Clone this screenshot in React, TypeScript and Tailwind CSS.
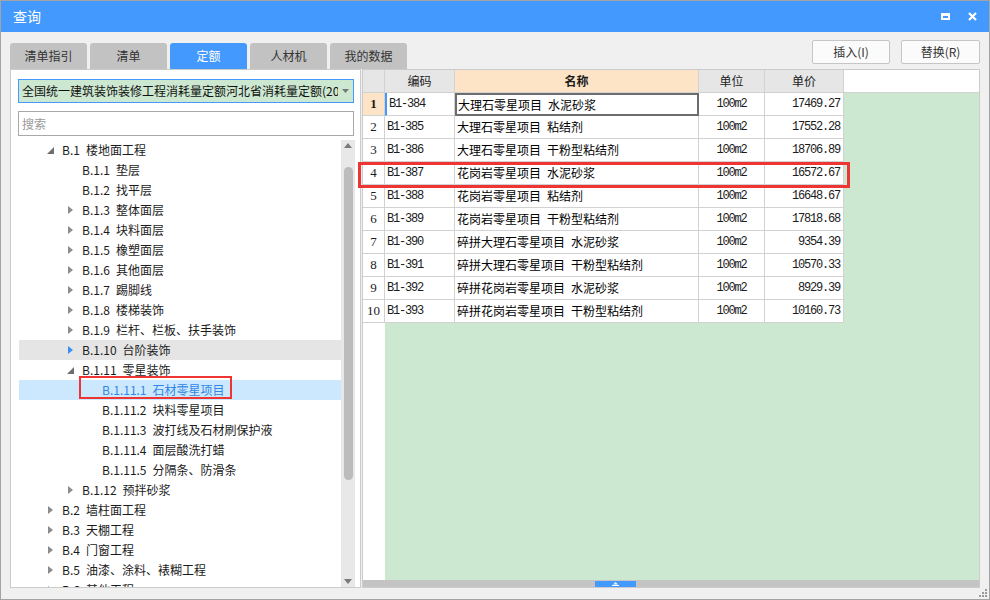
import React from 'react';

type Node = { lv: number; t: string; a?: 'open' | 'closed'; hover?: boolean; selected?: boolean };

const tree: Node[] = [
  { lv: 0, t: 'B.1 楼地面工程', a: 'open' },
  { lv: 1, t: 'B.1.1 垫层' },
  { lv: 1, t: 'B.1.2 找平层' },
  { lv: 1, t: 'B.1.3 整体面层', a: 'closed' },
  { lv: 1, t: 'B.1.4 块料面层', a: 'closed' },
  { lv: 1, t: 'B.1.5 橡塑面层', a: 'closed' },
  { lv: 1, t: 'B.1.6 其他面层', a: 'closed' },
  { lv: 1, t: 'B.1.7 踢脚线', a: 'closed' },
  { lv: 1, t: 'B.1.8 楼梯装饰', a: 'closed' },
  { lv: 1, t: 'B.1.9 栏杆、栏板、扶手装饰', a: 'closed' },
  { lv: 1, t: 'B.1.10 台阶装饰', a: 'closed', hover: true },
  { lv: 1, t: 'B.1.11 零星装饰', a: 'open' },
  { lv: 2, t: 'B.1.11.1 石材零星项目', selected: true },
  { lv: 2, t: 'B.1.11.2 块料零星项目' },
  { lv: 2, t: 'B.1.11.3 波打线及石材刷保护液' },
  { lv: 2, t: 'B.1.11.4 面层酸洗打蜡' },
  { lv: 2, t: 'B.1.11.5 分隔条、防滑条' },
  { lv: 1, t: 'B.1.12 预拌砂浆', a: 'closed' },
  { lv: 0, t: 'B.2 墙柱面工程', a: 'closed' },
  { lv: 0, t: 'B.3 天棚工程', a: 'closed' },
  { lv: 0, t: 'B.4 门窗工程', a: 'closed' },
  { lv: 0, t: 'B.5 油漆、涂料、裱糊工程', a: 'closed' },
  { lv: 0, t: 'B.6 其他工程', a: 'closed' },
];

// en space between the two halves of the name, as the grid renders it
const rows = [
  ['B1-384', '大理石零星项目\u2002水泥砂浆', '17469.27'],
  ['B1-385', '大理石零星项目\u2002粘结剂', '17552.28'],
  ['B1-386', '大理石零星项目\u2002干粉型粘结剂', '18706.89'],
  ['B1-387', '花岗岩零星项目\u2002水泥砂浆', '16572.67'],
  ['B1-388', '花岗岩零星项目\u2002粘结剂', '16648.67'],
  ['B1-389', '花岗岩零星项目\u2002干粉型粘结剂', '17818.68'],
  ['B1-390', '碎拼大理石零星项目\u2002水泥砂浆', '9354.39'],
  ['B1-391', '碎拼大理石零星项目\u2002干粉型粘结剂', '10570.33'],
  ['B1-392', '碎拼花岗岩零星项目\u2002水泥砂浆', '8929.39'],
  ['B1-393', '碎拼花岗岩零星项目\u2002干粉型粘结剂', '10160.73'],
];

const indent = ['pl-[24px]', 'pl-[44px]', 'pl-[64px]'];
const tabs = ['清单指引', '清单', '定额', '人材机', '我的数据'];

function Arrow({ a, blue }: { a?: 'open' | 'closed'; blue?: boolean }) {
  if (a === 'open')
    return (
      <svg width="7" height="7" viewBox="0 0 7 7">
        <path d="M7 0 L7 7 L0 7 Z" fill="#6e6e6e" />
      </svg>
    );
  if (a === 'closed')
    return (
      <svg width="5" height="8" viewBox="0 0 5 8">
        <path d="M0 0 L5 4 L0 8 Z" fill={blue ? '#3c8ff0' : '#8c8c8c'} />
      </svg>
    );
  return null;
}

const mono = "[font-family:'Liberation_Mono',monospace] text-[12px] tracking-[-1.2px]";

export default function App() {
  return (
    <div className="w-[990px] h-[600px] bg-[#f0f0f0] border border-[#a3a3a3] flex flex-col text-[12px] text-[#1b1b1b] [font-family:'Noto_Sans_CJK_SC','Noto_Sans',sans-serif] overflow-hidden">
      {/* title bar */}
      <div className="h-[31px] shrink-0 bg-[#4499fe] flex items-center pl-[12px] pr-[7px]">
        <span className="text-white text-[14px] flex-1">查询</span>
        <div className="w-[9px] h-[7px] border-white border-t-[3px] border-x-[2px] border-b-[2px] mr-[18px]" />
        <svg width="9" height="9" viewBox="0 0 9 9" className="mr-[5px]">
          <path d="M1 1 L8 8 M8 1 L1 8" stroke="white" strokeWidth="2.2" />
        </svg>
      </div>

      {/* tabs and buttons */}
      <div className="h-[37px] shrink-0 flex items-end px-[9px]">
        <div className="flex gap-[3px] self-end">
          {tabs.map((t, i) => (
            <div
              key={t}
              className={
                i === 2
                  ? 'w-[77px] h-[26px] rounded-t-[3px] bg-[#4499fe] text-white flex items-center justify-center'
                  : 'w-[77px] h-[26px] rounded-t-[3px] bg-[#c2c2c2] text-[#333] flex items-center justify-center'
              }
            >
              {t}
            </div>
          ))}
        </div>
        <div className="flex-1" />
        <div className="flex gap-[11px] self-start mt-[8px]">
          <button className="w-[78px] h-[24px] bg-[#fbfbfb] border border-[#c6c6c6] rounded-[2px] text-[#333]">插入(I)</button>
          <button className="w-[79px] h-[24px] bg-[#fbfbfb] border border-[#c6c6c6] rounded-[2px] text-[#333]">替换(R)</button>
        </div>
      </div>

      {/* content */}
      <div className="h-[519px] shrink-0 flex px-[9px] gap-[1px]">
        {/* left panel */}
        <div className="w-[351px] bg-white border border-[#cbcbcb] flex flex-col pt-[9px] pl-[7px] pr-[5px]">
          <div className="h-[24px] mr-[1px] bg-[#cde8d0] border border-[#4499fe] flex items-center pl-[3px] pr-[4px]">
            <span className="flex-1 whitespace-nowrap overflow-hidden text-[#111]">全国统一建筑装饰装修工程消耗量定额河北省消耗量定额(2012)</span>
            <svg width="7" height="4" viewBox="0 0 7 4" className="ml-[4px] shrink-0">
              <path d="M0 0 L7 0 L3.5 4 Z" fill="#777" />
            </svg>
          </div>
          <div className="h-[25px] mr-[1px] mt-[8px] border border-[#a9a9a9] flex items-center pl-[3px] text-[#9a9a9a]">搜索</div>
          <div className="flex-1 min-h-0 mt-[4px] flex">
            <div className="flex-1 ml-[1px] overflow-hidden">
              {tree.map((n) => (
                <div
                  key={n.t}
                  className={
                    'relative h-[20px] flex items-center whitespace-nowrap ' +
                    indent[n.lv] +
                    (n.hover ? ' bg-[#e5e5e5]' : '') +
                    (n.selected ? ' bg-[#cce8ff] text-[#2f86e6]' : '')
                  }
                >
                  <span className="w-[14px] flex items-center justify-center shrink-0">
                    <Arrow a={n.a} blue={n.hover} />
                  </span>
                  <span className="ml-[5px]">{n.t.replace(' ', '\u2002')}</span>
                  {n.selected && (
                    <div className="absolute left-[60px] top-[-4px] w-[153px] h-[23px] border-[2px] border-[#ef3434]" />
                  )}
                </div>
              ))}
            </div>
            <div className="w-[14px] bg-[#e8e8e8] flex flex-col items-center">
              <svg width="8" height="5" viewBox="0 0 8 5" className="mt-[3px]">
                <path d="M0 5 L4 0 L8 5 Z" fill="#7a7a7a" />
              </svg>
              <div className="w-[9px] h-[313px] mt-[19px] rounded-full bg-[#bcbcbc]" />
              <div className="flex-1" />
              <svg width="8" height="5" viewBox="0 0 8 5" className="mb-[3px]">
                <path d="M0 0 L8 0 L4 5 Z" fill="#7a7a7a" />
              </svg>
            </div>
          </div>
        </div>

        {/* right panel */}
        <div className="relative flex-1 bg-white border border-[#cbcbcb] flex flex-col">
          <div className="h-[23px] shrink-0 flex border-b border-[#d2d2d2] text-[12px]">
            <div className="w-[22px] bg-[#e6e6e6] border-r border-[#d2d2d2]" />
            <div className="w-[70px] bg-[#e6e6e6] border-r border-[#d2d2d2] flex items-center justify-center">编码</div>
            <div className="w-[244px] bg-[#fde4c6] border-r border-[#d2d2d2] flex items-center justify-center font-bold">名称</div>
            <div className="w-[66px] bg-[#e6e6e6] border-r border-[#d2d2d2] flex items-center justify-center">单位</div>
            <div className="w-[79px] bg-[#e6e6e6] border-r border-[#d2d2d2] flex items-center justify-center">单价</div>
            <div className="flex-1 bg-white" />
          </div>
          {rows.map((r, i) => (
            <div key={r[0]} className="h-[23px] shrink-0 flex">
              <div
                className={
                  i === 0
                    ? 'w-[22px] bg-[#fde4c6] border-r border-b border-[#d2d2d2] flex items-center justify-center font-bold [font-family:"Liberation_Serif",serif] text-[13px]'
                    : 'w-[22px] border-r border-b border-[#d2d2d2] flex items-center justify-center [font-family:"Liberation_Serif",serif] text-[13px]'
                }
              >
                {i + 1}
              </div>
              <div
                className={
                  'w-[70px] border-r border-b border-[#d2d2d2] flex items-center pl-[2px] ' +
                  mono +
                  (i === 0 ? ' border-l-[2px] border-l-[#4499fe]' : '')
                }
              >
                {r[0]}
              </div>
              <div
                className={
                  i === 0
                    ? 'w-[244px] border-[2px] border-[#6d6d6d] flex items-center pl-[1px] text-black'
                    : 'w-[244px] border-r border-b border-[#d2d2d2] flex items-center pl-[2px] text-black'
                }
              >
                {r[1]}
              </div>
              <div className={'w-[66px] border-r border-b border-[#d2d2d2] flex items-center justify-center ' + mono}>
                100m2
              </div>
              <div className={'w-[79px] border-r border-b border-[#d2d2d2] flex items-center justify-end pr-[3px] ' + mono}>
                {r[2]}
              </div>
              <div className="flex-1 bg-[#cde8d0]" />
            </div>
          ))}
          <div className="flex-1 flex min-h-0">
            <div className="w-[22px] bg-white" />
            <div className="flex-1 bg-[#cde8d0]" />
          </div>
          <div className="h-[7px] shrink-0 bg-[#c4c4c4] flex items-center pl-[232px]">
            <div className="w-[41px] h-[6px] bg-[#4499fe] flex items-center justify-center">
              <svg width="7" height="4" viewBox="0 0 7 4">
                <path d="M1 2.5 L3.5 0 L6 2.5 Z M0 3 L7 3 L7 4 L0 4 Z" fill="white" />
              </svg>
            </div>
          </div>
          <div className="absolute left-[-5px] top-[92px] w-[492px] h-[26px] border-[3px] border-[#ef3434]" />
        </div>
      </div>

      {/* bottom strip with resize grip */}
      <div className="flex-1 flex items-end justify-end pr-[2px] pb-[2px]">
        <svg width="8" height="8" viewBox="0 0 8 8">
          <rect x="6" y="0" width="2" height="2" fill="#9a9a9a" />
          <rect x="3" y="3" width="2" height="2" fill="#9a9a9a" />
          <rect x="6" y="3" width="2" height="2" fill="#9a9a9a" />
          <rect x="0" y="6" width="2" height="2" fill="#9a9a9a" />
          <rect x="3" y="6" width="2" height="2" fill="#9a9a9a" />
          <rect x="6" y="6" width="2" height="2" fill="#9a9a9a" />
        </svg>
      </div>
    </div>
  );
}
